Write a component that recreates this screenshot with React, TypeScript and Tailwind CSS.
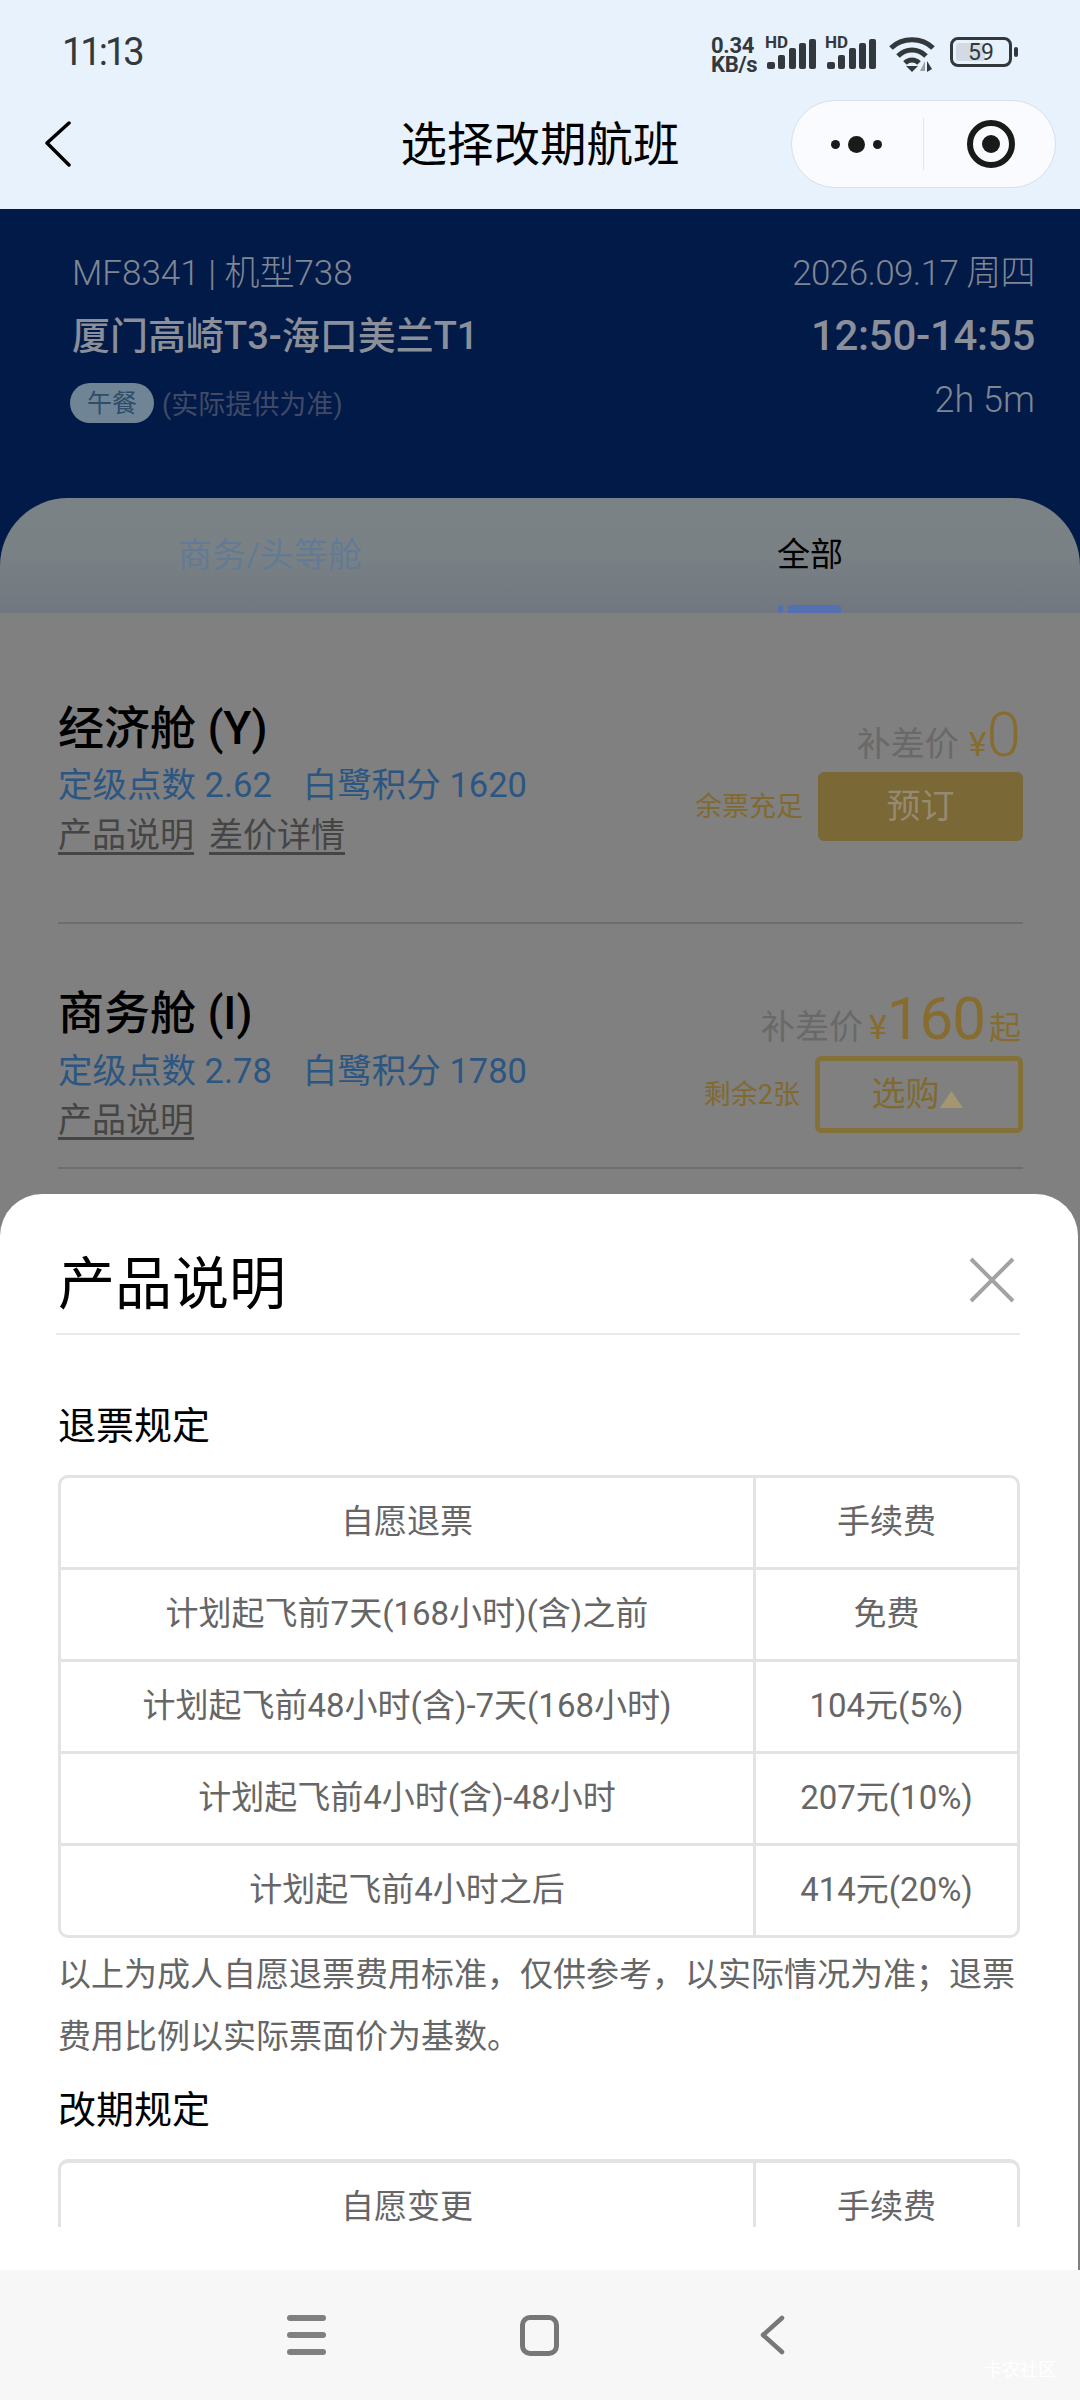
import React from "react";

const Signal = () => (
  <svg width="50" height="32" viewBox="0 0 50 32" fill="#33383d">
    <rect x="1" y="24" width="8" height="7" rx="2" />
    <rect x="12" y="17" width="7" height="14" rx="2" />
    <rect x="23" y="10" width="7" height="21" rx="2" />
    <rect x="33" y="5" width="7" height="26" rx="2" />
    <rect x="43" y="1" width="7" height="30" rx="2" />
  </svg>
);

const Wifi = () => (
  <svg width="48" height="36" viewBox="0 0 48 36" fill="none" stroke="#33383d" strokeWidth="5">
    <path d="M2 12 C 13 1, 33 1, 44 12" />
    <path d="M9 20 C 17 12, 29 12, 37 20" />
    <path d="M16 27 C 20 23, 26 23, 30 27" />
    <path d="M23 36 l-6 -6 h12 z" fill="#33383d" stroke="none" />
    <path d="M36 25 v10 l-5 0 z" fill="#9aa0a6" stroke="none" />
    <path d="M38 36 v-11 l5 8 z" fill="#33383d" stroke="none" />
  </svg>
);

const Cell = ({ children, first }: { children: React.ReactNode; first?: boolean }) => (
  <div className={first ? "flex items-center justify-center pb-[2px] border-r-[3px] border-[#e2e4e4]" : "flex items-center justify-center pb-[2px]"}>
    {children}
  </div>
);

const rows = [
  ["自愿退票", "手续费"],
  ["计划起飞前7天(168小时)(含)之前", "免费"],
  ["计划起飞前48小时(含)-7天(168小时)", "104元(5%)"],
  ["计划起飞前4小时(含)-48小时", "207元(10%)"],
  ["计划起飞前4小时之后", "414元(20%)"],
];

export default function App() {
  return (
    <div className="relative w-[1080px] h-[2400px] overflow-hidden bg-[#808080] font-[Roboto,'Noto_Sans_CJK_SC',sans-serif] text-black">
      {/* top bar */}
      <div className="h-[209px] bg-[#e8f2fd] flex flex-col">
        <div className="h-[100px] pl-[62px] pr-[62px] flex items-start justify-between">
          <div className="mt-[29px] text-[38px] leading-[46px] tracking-[-3px] text-[#33383d]">11:13</div>
          <div className="mt-[36px] flex items-start">
            <div className="w-[54px] text-[22px] leading-[19px] font-bold text-[#33383d] tracking-[-0.3px]">
              <div>0.34</div>
              <div>KB/s</div>
            </div>
            <div className="relative w-[60px] h-[34px]">
              <span className="absolute left-0 top-0 text-[17px] leading-[12px] font-bold text-[#33383d]">HD</span>
              <div className="absolute left-[1px] top-[2px]"><Signal /></div>
            </div>
            <div className="relative w-[64px] h-[34px]">
              <span className="absolute left-0 top-0 text-[17px] leading-[12px] font-bold text-[#33383d]">HD</span>
              <div className="absolute left-[1px] top-[2px]"><Signal /></div>
            </div>
            <Wifi />
            <div className="ml-[13px] mt-[1px] flex items-center">
              <div className="w-[62px] h-[30px] rounded-[8px] border-[3px] border-[#33383d] p-[3px] relative">
                <div className="w-[29px] h-full bg-[#d3dae3] rounded-[3px]" />
                <span className="absolute inset-0 flex items-center justify-center text-[23px] leading-none text-[#33383d]">59</span>
              </div>
              <div className="ml-[2px] w-[4px] h-[10px] bg-[#33383d] rounded-[2px]" />
            </div>
          </div>
        </div>
        <div className="relative h-[109px] flex items-start">
          <svg className="ml-[44px] mt-[21px]" width="28" height="46" viewBox="0 0 28 46" fill="none" stroke="#000" strokeWidth="3.5" strokeLinecap="round" strokeLinejoin="round">
            <path d="M25 2 L3 22 L25 44" />
          </svg>
          <div className="absolute left-0 right-0 top-[15px] text-center text-[46.5px] leading-[60px]">选择改期航班</div>
          <div className="absolute left-[791px] top-0 w-[265px] h-[88px] rounded-full bg-[#f9fbfe] border border-[#d8e0ea] flex items-center">
            <div className="w-[131px] flex items-center justify-center gap-[8px] pr-[2px]">
              <div className="w-[9px] h-[9px] rounded-full bg-[#1a1a1a]" />
              <div className="w-[17px] h-[17px] rounded-full bg-[#1a1a1a]" />
              <div className="w-[9px] h-[9px] rounded-full bg-[#1a1a1a]" />
            </div>
            <div className="w-px h-[52px] bg-[#dfe5ec]" />
            <div className="flex-1 flex items-center justify-center pl-[3px]">
              <div className="w-[48px] h-[48px] rounded-full border-[6px] border-[#1a1a1a] flex items-center justify-center">
                <div className="w-[18px] h-[18px] rounded-full bg-[#1a1a1a]" />
              </div>
            </div>
          </div>
        </div>
      </div>

      {/* flight info */}
      <div className="h-[404px] bg-[#021a47] flex flex-col justify-between">
        <div className="pl-[72px] pr-[45px] pt-[41px] flex justify-between">
          <div>
            <div className="text-[35px] leading-[48px] text-[#7f8694] font-light">MF8341 | 机型738</div>
            <div className="mt-[14px] text-[38px] leading-[48px] text-[#8a8f99] font-medium">厦门高崎T3-海口美兰T1</div>
            <div className="mt-[21px] -ml-[2px] flex items-center">
              <div className="w-[84px] h-[40px] rounded-full bg-[#6f8595] flex items-center justify-center text-[25px] leading-none text-[#2f4c68]">午餐</div>
              <div className="ml-[8px] mt-[4px] text-[27px] leading-[40px] text-[#3f4a68]">(实际提供为准)</div>
            </div>
          </div>
          <div className="flex flex-col items-end">
            <div className="text-[35px] leading-[48px] tracking-[-0.6px] text-[#7f8694] font-light">2026.09.17 周四</div>
            <div className="mt-[14px] text-[42px] leading-[48px] tracking-[-0.3px] text-[#8a8f99] font-medium">12:50-14:55</div>
            <div className="mt-[16px] text-[36px] leading-[48px] text-[#7f8694] font-light">2h 5m</div>
          </div>
        </div>
        <div className="h-[115px] rounded-t-[68px] bg-linear-to-b from-[#7b8285] via-[#7a8185] to-[#70777f] flex">
          <div className="w-[540px] flex justify-center">
            <span className="mt-[36px] text-[34px] leading-[42px] text-[#637a94]">商务/头等舱</span>
          </div>
          <div className="w-[540px] relative flex justify-center">
            <span className="mt-[36px] text-[33px] leading-[42px] text-black">全部</span>
            <div className="absolute left-[238px] bottom-0 flex items-center gap-[5px]">
              <div className="w-[5px] h-[8px] rounded-full bg-[#5570b0]" />
              <div className="w-[53px] h-[8px] rounded-t-[3px] bg-[#5570b0]" />
            </div>
          </div>
        </div>
      </div>

      {/* row 1 */}
      <div className="mx-[58px] w-[965px] h-[311px] border-b-2 border-[#6e6e6e] flex justify-between">
        <div className="pt-[85px]">
          <div className="text-[46px] leading-[60px] font-medium">经济舱 (Y)</div>
          <div className="mt-[2px] text-[34.5px] leading-[50px] text-[#2c5682] flex">
            <span>定级点数 2.62</span>
            <span className="ml-[31px]">白鹭积分 1620</span>
          </div>
          <div className="mt-[3px] flex gap-[15px] text-[34px] leading-[44px] text-[#454545]">
            <span className="underline underline-offset-[5px] decoration-[3px]">产品说明</span>
            <span className="underline underline-offset-[5px] decoration-[3px]">差价详情</span>
          </div>
        </div>
        <div className="pt-[92px] flex flex-col items-end">
          <div className="h-[60px] pr-[2px] flex items-baseline">
            <span className="text-[34px] leading-[60px] text-[#696969]">补差价</span>
            <span className="ml-[10px] text-[34px] leading-[60px] text-[#866d2f]">¥</span>
            <span className="text-[62px] leading-[60px] font-light text-[#866d2f]">0</span>
          </div>
          <div className="mt-[7px] flex items-center">
            <span className="mr-[15px] text-[27px] leading-[40px] text-[#806a30]">余票充足</span>
            <div className="w-[205px] h-[69px] rounded-[6px] bg-[#7a6836] flex items-center justify-center text-[34px] text-[#968a70]">预订</div>
          </div>
        </div>
      </div>

      {/* row 2 */}
      <div className="mx-[58px] w-[965px] h-[245px] border-b-2 border-[#6e6e6e] flex justify-between">
        <div className="pt-[59px]">
          <div className="text-[46px] leading-[60px] font-medium">商务舱 (I)</div>
          <div className="mt-[3px] text-[34.5px] leading-[50px] text-[#2c5682] flex">
            <span>定级点数 2.78</span>
            <span className="ml-[31px]">白鹭积分 1780</span>
          </div>
          <div className="mt-[2px] text-[34px] leading-[44px] text-[#454545]">
            <span className="underline underline-offset-[5px] decoration-[3px]">产品说明</span>
          </div>
        </div>
        <div className="pt-[65px] flex flex-col items-end">
          <div className="h-[60px] pr-[2px] flex items-baseline">
            <span className="text-[34px] leading-[60px] text-[#696969]">补差价</span>
            <span className="ml-[6px] text-[34px] leading-[60px] text-[#866d2f]">¥</span>
            <span className="text-[60px] leading-[60px] tracking-[-1px] text-[#866d2f]">160</span>
            <span className="ml-[4px] text-[32px] leading-[60px] text-[#866d2f]">起</span>
          </div>
          <div className="mt-[7px] flex items-center">
            <span className="mr-[15px] text-[27px] leading-[40px] text-[#806a30]">剩余2张</span>
            <div className="w-[208px] h-[77px] rounded-[6px] border-[5px] border-[#84713a] flex items-center justify-center pr-[4px] text-[34px] text-[#806a30]">
              <span>选购</span>
              <svg className="mt-[10px]" width="23" height="17" viewBox="0 0 23 17"><path d="M11.5 0 L23 17 H0 Z" fill="#a39670" /></svg>
            </div>
          </div>
        </div>
      </div>

      {/* modal */}
      <div className="absolute left-0 top-[1194px] w-[1078px] h-[1076px] bg-white rounded-t-[42px] overflow-hidden">
        <div className="h-[1033px] overflow-hidden">
          <div className="ml-[56px] w-[964px] h-[141px] border-b-2 border-[#e8eaec] flex items-end justify-between pb-[9px]">
            <div className="ml-[2px] text-[57px] leading-[78px]">产品说明</div>
            <svg className="mb-[21px] mr-[5px]" width="46" height="46" viewBox="0 0 46 46" fill="none" stroke="#a3a3a3" strokeWidth="4">
              <path d="M2 2 L44 44 M44 2 L2 44" />
            </svg>
          </div>
          <div className="ml-[58px] w-[962px]">
            <div className="mt-[63px] mb-[21px] text-[38px] leading-[56px]">退票规定</div>
            <div className="rounded-[10px] border-[3px] border-[#e2e4e4] overflow-hidden">
              {rows.map((r, i) => (
                <div key={i} className={i === 0 ? "grid grid-cols-[695px_1fr] h-[89px] text-[33px] text-[#666666]" : "grid grid-cols-[695px_1fr] h-[92px] border-t-[3px] border-[#e2e4e4] text-[33px] text-[#666666]"}>
                  <Cell first>{r[0]}</Cell>
                  <Cell>{r[1]}</Cell>
                </div>
              ))}
            </div>
            <p className="mt-[6px] text-[33px] leading-[62px] text-[#666666]">
              以上为成人自愿退票费用标准，仅供参考，以实际情况为准；退票费用比例以实际票面价为基数。
            </p>
            <div className="mt-[14px] mb-[21px] text-[38px] leading-[56px]">改期规定</div>
            <div className="rounded-t-[10px] border-x-[3px] border-t-[4px] border-[#e2e4e4] overflow-hidden">
              <div className="grid grid-cols-[695px_1fr] h-[89px] text-[33px] text-[#666666]">
                <Cell first>自愿变更</Cell>
                <Cell>手续费</Cell>
              </div>
            </div>
          </div>
        </div>
      </div>

      {/* system nav */}
      <div className="absolute left-0 right-0 bottom-0 h-[130px] bg-[#f7f7f7]">
        <div className="h-full flex items-start pl-[287px] pt-[45px]">
          <div className="w-[39px] h-[40px] flex flex-col justify-between">
            <div className="h-[6px] rounded-full bg-[#808080]" />
            <div className="h-[6px] rounded-full bg-[#808080]" />
            <div className="h-[6px] rounded-full bg-[#808080]" />
          </div>
          <div className="ml-[194px] w-[39px] h-[41px] rounded-[10px] border-[5px] border-[#777777]" />
          <svg className="ml-[200px]" width="26" height="40" viewBox="0 0 26 40" fill="none" stroke="#777777" strokeWidth="4.5" strokeLinecap="round" strokeLinejoin="round">
            <path d="M23 3 L4 20 L23 37" />
          </svg>
        </div>
        <div className="absolute right-[24px] bottom-[20px] text-[18px] leading-[20px] text-white">卡农社区</div>
      </div>
    </div>
  );
}
